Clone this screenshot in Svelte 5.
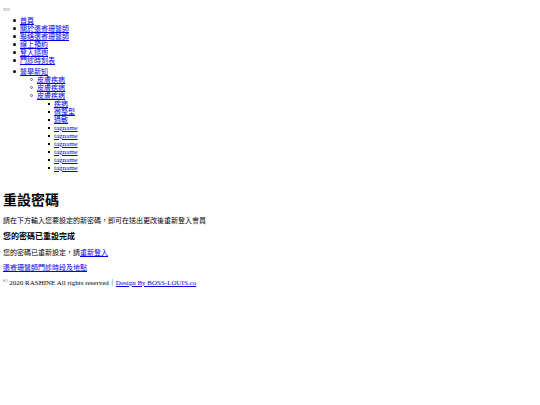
<script lang="ts">
  interface MenuItem {
    label: string;
    href: string;
  }

  const pages: MenuItem[] = [
    { label: '首頁', href: '#home' },
    { label: '關於張睿珊醫師', href: '#about' },
    { label: '聯絡張睿珊醫師', href: '#contact' },
    { label: '線上預約', href: '#booking' },
    { label: '登入諮詢', href: '#login' },
    { label: '門診時刻表', href: '#schedule' }
  ];

  const categories = ['皮膚疾病', '皮膚疾病', '皮膚疾病'];

  const tags = ['疾病', '微整型', '過敏', 'tagname', 'tagname', 'tagname', 'tagname', 'tagname', 'tagname'];

  let menuOpen = $state(true);
</script>

<div class="page">
  <header>
    <button
      type="button"
      class="toggle"
      aria-label="選單"
      aria-expanded={menuOpen}
      onclick={() => (menuOpen = !menuOpen)}
    ></button>

    {#if menuOpen}
      <nav>
        <ul>
          {#each pages as page}
            <li><a href={page.href}>{page.label}</a></li>
          {/each}
        </ul>
        <ul>
          <li>
            <a href="#news">醫學新知</a>
            <ul>
              {#each categories as category, i}
                <li>
                  <a href="#category">{category}</a>
                  {#if i === categories.length - 1}
                    <ul>
                      {#each tags as tag}
                        <li><a href="#tag">{tag}</a></li>
                      {/each}
                    </ul>
                  {/if}
                </li>
              {/each}
            </ul>
          </li>
        </ul>
      </nav>
    {/if}
  </header>

  <main>
    <h1>重設密碼</h1>
    <p>請在下方輸入您要設定的新密碼，即可在送出更改後重新登入會員</p>
    <h3>您的密碼已重設完成</h3>
    <p>您的密碼已重新設定，請<a href="#login">重新登入</a></p>
  </main>

  <footer>
    <p><a href="#schedule">張睿珊醫師門診時段及地點</a></p>
    <p><sup>©</sup> 2020 RASHINE All rights reserved｜<a href="#design">Design By BOSS-LOUIS.co</a></p>
  </footer>
</div>

<style>
  .page {
    padding: 8px 3px;
    font-family: 'Liberation Serif', 'Noto Sans CJK TC', serif;
    font-size: 7px;
    line-height: 8px;
    color: #000;
  }

  .toggle {
    display: block;
    width: 7px;
    height: 3px;
    padding: 0;
    border: 1px solid #d0d0d0;
    border-radius: 1px;
    background: #e4e4e4;
  }

  nav {
    padding-top: 6px;
  }

  ul {
    margin: 0 0 3px;
    padding-left: 17px;
    list-style: none;
  }

  ul ul {
    margin: 0;
  }

  /* native markers sit too far out at this text size */
  li::before {
    content: '';
    display: inline-block;
    box-sizing: border-box;
    width: 3px;
    height: 3px;
    margin: 0 4px 0 -7px;
    border-radius: 50%;
    background: #000;
    vertical-align: 1px;
  }

  ul ul li::before {
    border: 1px solid #666;
    background: #fff;
  }

  ul ul ul li::before {
    width: 2px;
    height: 2px;
    margin-left: -6px;
    border: none;
    border-radius: 0;
    background: #000;
  }

  a {
    color: #0000ee;
    text-decoration: underline;
  }

  main {
    padding-top: 17px;
  }

  h1 {
    margin: 0 0 7px;
    font-size: 14px;
    line-height: 18px;
  }

  h3 {
    margin: 0 0 7px;
    font-size: 8px;
    line-height: 10px;
  }

  p {
    margin: 0 0 7px;
  }

  sup {
    font-size: 6px;
    line-height: 0;
    vertical-align: 2px;
  }
</style>
